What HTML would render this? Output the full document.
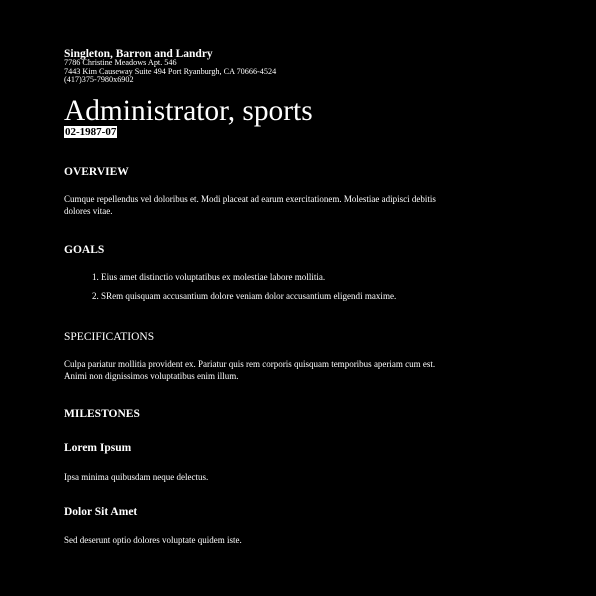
<!DOCTYPE html>
<html><head><style>
body{margin:0;background:#000;width:596px;height:596px;overflow:hidden;font-family:"Liberation Serif",serif;color:#fff}
div{position:absolute;left:64px;white-space:nowrap}
.s{font-size:9px;line-height:12px}
.h{font-size:11.5px;font-weight:bold;line-height:14px}
</style></head><body>
<div class="h" style="top:47px">Singleton, Barron and Landry</div>
<div style="top:59px;font-size:8.2px;line-height:8.5px">7786 Christine Meadows Apt. 546<br>7443 Kim Causeway Suite 494 Port Ryanburgh, CA 70666-4524<br>(417)375-7980x6902</div>
<div style="top:94px;font-size:29.4px;line-height:34px">Administrator, sports</div>
<div style="top:126px;font-size:11px;font-weight:bold;line-height:12px;background:#fff;color:#000;padding:0 1px">02-1987-07</div>
<div class="h" style="top:165px">OVERVIEW</div>
<div class="s" style="top:193px">Cumque repellendus vel doloribus et. Modi placeat ad earum exercitationem. Molestiae adipisci debitis<br>dolores vitae.</div>
<div class="h" style="top:243px">GOALS</div>
<div class="s" style="top:271px;left:92px;font-size:9.05px">1. Eius amet distinctio voluptatibus ex molestiae labore mollitia.</div>
<div class="s" style="top:290px;left:92px;font-size:9.05px">2. SRem quisquam accusantium dolore veniam dolor accusantium eligendi maxime.</div>
<div style="top:330px;font-size:11.5px;line-height:14px">SPECIFICATIONS</div>
<div class="s" style="top:358px">Culpa pariatur mollitia provident ex. Pariatur quis rem corporis quisquam temporibus aperiam cum est.<br>Animi non dignissimos voluptatibus enim illum.</div>
<div class="h" style="top:407px">MILESTONES</div>
<div class="h" style="top:441px">Lorem Ipsum</div>
<div class="s" style="top:471px">Ipsa minima quibusdam neque delectus.</div>
<div class="h" style="top:505px">Dolor Sit Amet</div>
<div class="s" style="top:534px">Sed deserunt optio dolores voluptate quidem iste.</div>
</body></html>
